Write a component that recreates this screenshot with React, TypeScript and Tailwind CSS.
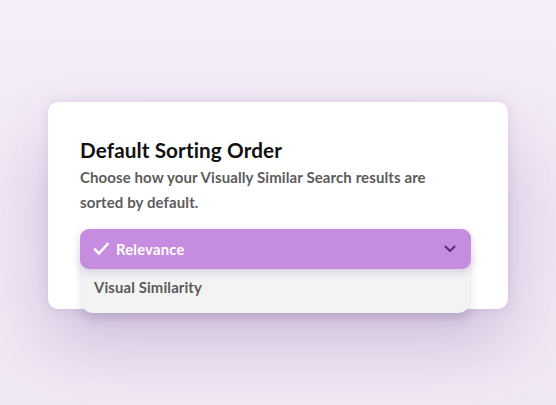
import React from "react";

export default function App() {
  return (
    <div
      className="w-[556px] h-[405px] overflow-hidden flex justify-center bg-gradient-to-b from-[#f6effa] via-[#efe6f4] to-[#f1e8f5]"
      style={{ fontFamily: "Lato, 'Noto Sans', sans-serif" }}
    >
      <div className="relative mt-[102px] w-[460px] h-[207px] self-start rounded-[10px] bg-white shadow-[0_36px_70px_-6px_rgba(120,80,150,0.3),0_0_12px_rgba(150,110,180,0.18)] pl-[32px] pt-[36px]">
        <h1 className="text-[20.7px] leading-[24px] font-bold text-[#111111] tracking-[0.1px]">
          Default Sorting Order
        </h1>
        <p className="mt-[3px] text-[15px] leading-[25px] font-bold text-[#5c5c5c] w-[380px] tracking-[0.1px]">
          Choose how your Visually Similar Search results are sorted by default.
        </p>
        <div className="relative mt-[14px] w-[391px]">
          <div className="absolute left-[2px] right-[2px] top-[20px] h-[64px] rounded-b-[10px] bg-[#f3f3f4] shadow-[0_6px_10px_rgba(110,80,140,0.22)]" />
          <div className="relative flex items-center h-[40px] rounded-[9px] bg-[#c58ce0] px-[13px] shadow-[0_3px_8px_rgba(120,90,160,0.25)]">
            <svg width="16" height="14" viewBox="0 0 16 14" className="mr-[7px]">
              <path d="M2 7.5 L6 11.5 L14.5 2" fill="none" stroke="white" strokeWidth="2.6" strokeLinecap="round" strokeLinejoin="round" />
            </svg>
            <span className="text-[14.8px] font-bold text-white tracking-[0.2px]">Relevance</span>
            <svg width="12" height="8" viewBox="0 0 12 8" className="ml-auto mr-[2px]">
              <path d="M1.5 1.5 L6 6 L10.5 1.5" fill="none" stroke="#5b2c6f" strokeWidth="2" strokeLinecap="round" strokeLinejoin="round" />
            </svg>
          </div>
          <div className="absolute left-[14px] top-[47px] text-[14.8px] font-bold text-[#5a5a5a] tracking-[0.15px]">
            Visual Similarity
          </div>
        </div>
      </div>
    </div>
  );
}
